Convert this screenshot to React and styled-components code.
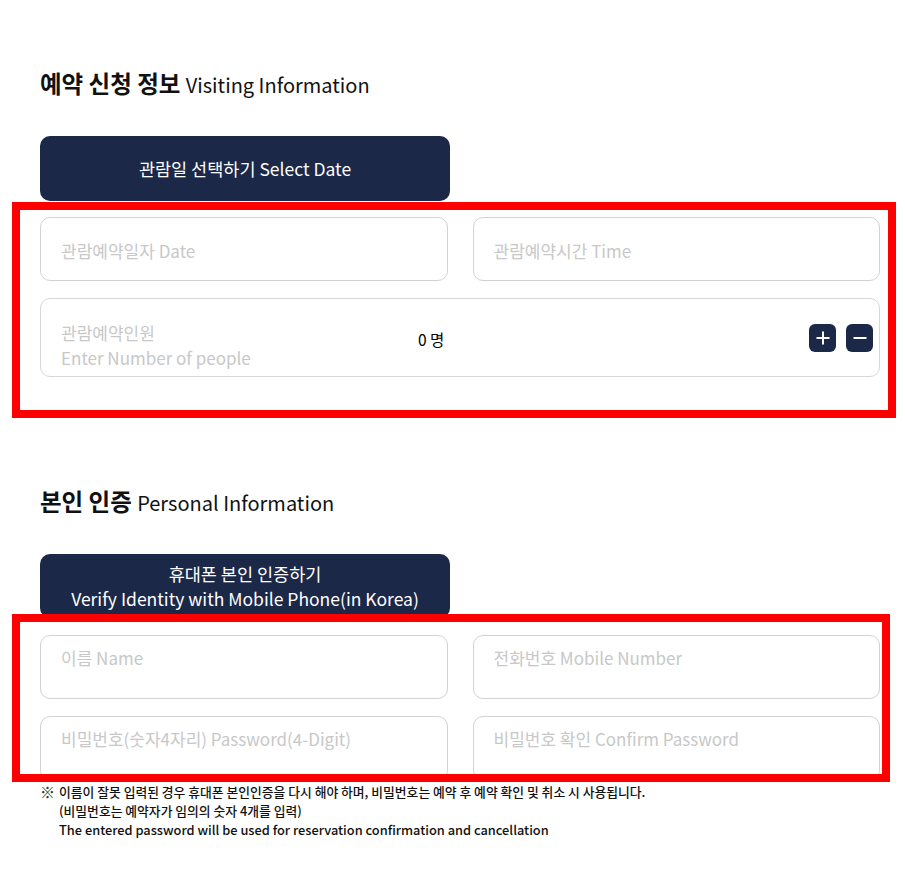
import React from 'react';
import styled, { createGlobalStyle } from 'styled-components';

const GlobalStyle = createGlobalStyle`
  body {
    margin: 0;
    background: #fff;
    font-family: 'Noto Sans CJK KR', 'Noto Sans', sans-serif;
    color: #111;
  }
  * {
    box-sizing: border-box;
  }
`;

const navy = '#1c2848';

const Page = styled.div`
  width: 905px;
  padding: 68px 25px 40px 40px;
`;

const Section = styled.section`
  width: 840px;
  & + & {
    margin-top: 109px;
  }
`;

const Title = styled.h2`
  margin: 0;
  font-size: 23.5px;
  line-height: 30px;
  font-weight: 700;
  color: #111;
  span {
    font-size: 20px;
    font-weight: 400;
  }
`;

const MainButton = styled.button`
  display: block;
  width: 410px;
  margin-top: 36px;
  padding: ${props => (props.twoLine ? '7px 0' : '20px 0')};
  border: 0;
  border-radius: 10px;
  background: ${navy};
  color: #fff;
  font-family: inherit;
  font-size: 17.5px;
  line-height: 25px;
  font-weight: 400;
  text-align: center;
`;

const Fields = styled.div`
  position: relative;
  display: grid;
  grid-template-columns: 1fr 1fr;
  column-gap: 25px;
  row-gap: 17px;
  margin-top: ${props => props.offset || 16}px;
`;

// red annotation frame drawn over the field group
const Marker = styled.div`
  position: absolute;
  left: -28px;
  top: ${props => props.top}px;
  width: ${props => props.w}px;
  height: ${props => props.h}px;
  border: 8px solid #ff0000;
  pointer-events: none;
`;

const Input = styled.input`
  height: 64px;
  width: 100%;
  padding: 2px 20px 0;
  border: 1px solid #d2d2d2;
  border-radius: 10px;
  font-family: inherit;
  font-size: 17px;
  color: #111;
  outline: none;
  &::placeholder {
    color: #c8c8c8;
  }
`;

const Area = styled.textarea`
  display: block;
  height: 64px;
  width: 100%;
  padding: 10px 20px 0;
  border: 1px solid #d2d2d2;
  border-radius: 10px;
  font-family: inherit;
  font-size: 17px;
  line-height: 24px;
  color: #111;
  resize: none;
  outline: none;
  overflow: hidden;
  &::placeholder {
    color: #c8c8c8;
  }
`;

const PeopleBox = styled.div`
  grid-column: 1 / -1;
  display: flex;
  align-items: center;
  height: 79px;
  padding: 0 6px 0 20px;
  border: 1px solid #d8d8d8;
  border-radius: 10px;
`;

const PeopleLabel = styled.div`
  width: 357px;
  padding-top: 14px;
  font-size: 17px;
  line-height: 25px;
  color: #c8c8c8;
`;

const Count = styled.div`
  flex: 1;
  font-size: 15.5px;
  color: #000;
  padding-top: 2px;
`;

const Stepper = styled.div`
  display: flex;
  gap: 10px;
`;

const StepButton = styled.button`
  display: flex;
  align-items: center;
  justify-content: center;
  width: 27px;
  height: 28px;
  padding: 0;
  border: 0;
  border-radius: 6px;
  background: ${navy};
  color: #fff;
`;

const Note = styled.div`
  display: flex;
  gap: 4px;
  margin-top: 2px;
  font-size: 12.8px;
  line-height: 19px;
  font-weight: 500;
  color: #111;
`;

const Mark = styled.span`
  font-size: 15px;
  color: #333;
`;

const PlusIcon = () => (
  <svg width="14" height="14" viewBox="0 0 14 14">
    <path d="M7 0.5v13M0.5 7h13" stroke="#fff" strokeWidth="2" />
  </svg>
);

const MinusIcon = () => (
  <svg width="14" height="14" viewBox="0 0 14 14">
    <path d="M0.5 7h13" stroke="#fff" strokeWidth="2" />
  </svg>
);

export default function App() {
  return (
    <Page>
      <GlobalStyle />
      <Section>
        <Title>
          예약 신청 정보 <span>Visiting Information</span>
        </Title>
        <MainButton type="button">관람일 선택하기 Select Date</MainButton>
        <Fields>
          <Marker top={-15} w={884} h={216} />
          <Input placeholder="관람예약일자 Date" readOnly />
          <Input placeholder="관람예약시간 Time" readOnly />
          <PeopleBox>
            <PeopleLabel>
              관람예약인원
              <br />
              Enter Number of people
            </PeopleLabel>
            <Count>0 명</Count>
            <Stepper>
              <StepButton type="button" aria-label="plus">
                <PlusIcon />
              </StepButton>
              <StepButton type="button" aria-label="minus">
                <MinusIcon />
              </StepButton>
            </Stepper>
          </PeopleBox>
        </Fields>
      </Section>

      <Section>
        <Title>
          본인 인증 <span>Personal Information</span>
        </Title>
        <MainButton type="button" twoLine>
          휴대폰 본인 인증하기
          <br />
          Verify Identity with Mobile Phone(in Korea)
        </MainButton>
        <Fields offset={17}>
          <Marker top={-21} w={878} h={168} />
          <Area placeholder="이름 Name" />
          <Area placeholder="전화번호 Mobile Number" />
          <Area placeholder="비밀번호(숫자4자리) Password(4-Digit)" />
          <Area placeholder="비밀번호 확인 Confirm Password" />
        </Fields>
        <Note>
          <Mark>※</Mark>
          <div>
            이름이 잘못 입력된 경우 휴대폰 본인인증을 다시 해야 하며, 비밀번호는 예약 후 예약 확인 및 취소 시 사용됩니다.
            <br />
            (비밀번호는 예약자가 임의의 숫자 4개를 입력)
            <br />
            The entered password will be used for reservation confirmation and cancellation
          </div>
        </Note>
      </Section>
    </Page>
  );
}
